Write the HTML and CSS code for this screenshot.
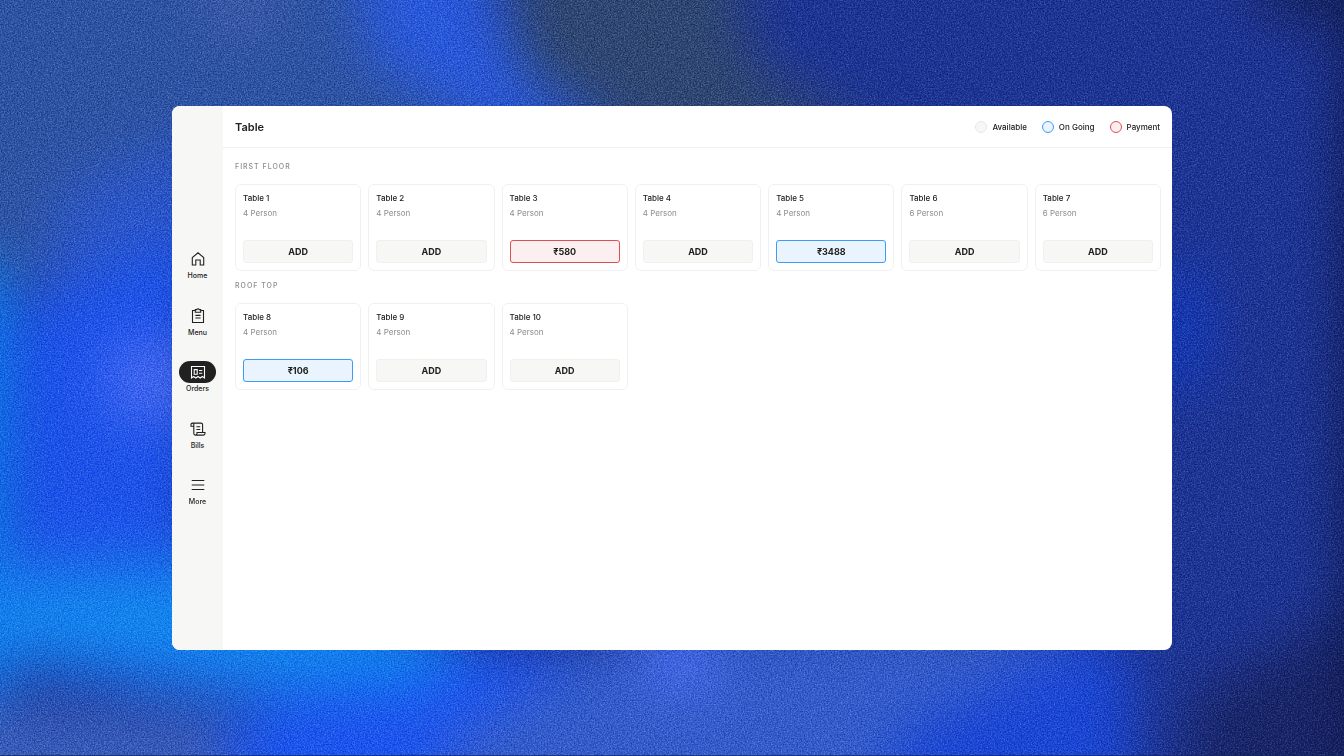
FILE: index.html
```html
<!DOCTYPE html>
<html lang="en">
<head>
    <meta charset="UTF-8">
    <meta name="viewport" content="width=device-width, initial-scale=1.0">
    <title>Table</title>
    <link rel="stylesheet" href="styles.css">
</head>
<body>
    <!-- Grainy blue backdrop -->
    <svg class="backdrop" viewBox="0 0 1344 756" preserveAspectRatio="none" aria-hidden="true">
        <defs>
            <filter id="soft" x="-20%" y="-20%" width="140%" height="140%" color-interpolation-filters="sRGB">
                <feGaussianBlur stdDeviation="28"/>
            </filter>
            <filter id="grain" x="0" y="0" width="100%" height="100%" color-interpolation-filters="sRGB">
                <feTurbulence type="fractalNoise" baseFrequency="0.7" numOctaves="3" seed="4"/>
                <feColorMatrix values="1.4 0 0 0 -0.2  1.4 0 0 0 -0.2  1.4 0 0 0 -0.2  0 0 0 0 1"/>
            </filter>
        </defs>
        <rect width="1344" height="756" fill="#1d3494"/>
        <g filter="url(#soft)">
            <path d="M-80-80H440L560 160H200V290H-80Z" fill="#2d53a3"/>
            <path d="M350-80H480L510 40 620 140H500L370 60Z" fill="#2858da"/>
            <ellipse cx="240" cy="0" rx="18" ry="34" fill="#5062b4"/>
            <path d="M500-80H730L750 60 890 150H640L520 70Z" fill="#2e4672"/>
            <path d="M60 190L210 130V300H40Z" fill="#2a56c8"/>
            <path d="M10 310L200 230V560H10Z" fill="#1c52e8"/>
            <ellipse cx="150" cy="380" rx="44" ry="40" fill="#4a6df2"/>
            <path d="M-80 260H4V700H-80Z" fill="#0a80ec"/>
            <path d="M-30 560L200 550 480 640 440 710 200 700 -30 660Z" fill="#1a6ee6"/>
            <path d="M-30 590L200 580 440 640 400 690 200 660 -30 640Z" fill="#1188ee"/>
            <path d="M-80 700L225 715 240 840H-80Z" fill="#385cba"/>
            <path d="M230 720L480 650H640V690L420 840H230Z" fill="#1c54ec"/>
            <ellipse cx="370" cy="660" rx="80" ry="26" fill="#0f84ee"/>
            <path d="M640 620H1080V840H430L450 740Z" fill="#335cca"/>
            <ellipse cx="680" cy="655" rx="30" ry="34" fill="#4f72fa"/>
            <path d="M890 740L1080 640H1130V840H890Z" fill="#1a46d4"/>
            <ellipse cx="1180" cy="330" rx="24" ry="70" fill="#1039c2"/>
            <path d="M1190 700L1430 560V840H1190Z" fill="#182468"/>
            <path d="M1342-80H1440V840H1342Z" fill="#101a54"/>
            <ellipse cx="1320" cy="-10" rx="70" ry="30" fill="#131f5a"/>
        </g>
        <rect class="grain" width="1344" height="756" filter="url(#grain)"/>
        <rect y="755" width="1344" height="1" fill="#14265e" fill-opacity="0.7"/>
    </svg>

    <div class="app">
        <aside class="sidebar">
            <nav class="nav">
                <a class="nav-item" href="#">
                    <span class="nav-icon">
                        <svg viewBox="0 0 16 16"><path d="M2.3 14V6.6L8 1.8l5.7 4.8V14h-3.5V9H5.8v5Z"/></svg>
                    </span>
                    <span>Home</span>
                </a>
                <a class="nav-item" href="#">
                    <span class="nav-icon">
                        <svg viewBox="0 0 16 16"><path d="M5.3 2.5H2.5v12h11v-12h-2.8M5.3 1.6h1.5a1.3 1.3 0 0 1 2.4 0h1.5v2.6H5.3ZM5.4 7.4h5.2M5.4 10h5.2"/></svg>
                    </span>
                    <span>Menu</span>
                </a>
                <a class="nav-item active" href="#">
                    <span class="nav-icon">
                        <svg viewBox="0 0 16 16"><path d="M1.5 14V2.5h13V14l-2.2-1.5L10.2 14 8 12.5 5.8 14l-2.1-1.5ZM4.2 5.6h3v4.6h-3ZM9 6.5h3.3M9 9.3h3.3"/></svg>
                    </span>
                    <span>Orders</span>
                </a>
                <a class="nav-item" href="#">
                    <span class="nav-icon">
                        <svg viewBox="0 0 16 16"><path d="M3.8 5.3H1V3.5a1.4 1.4 0 0 1 2.8 0v9a1.6 1.6 0 0 0 1.6 1.6h8A1.6 1.6 0 0 0 15 12.5v-1H7v1a1.6 1.6 0 0 1-1.6 1.6M2.4 2.1H11a1.6 1.6 0 0 1 1.6 1.6v7.8M6.4 5.8h3.8M6.4 8.5h3.8"/></svg>
                    </span>
                    <span>Bills</span>
                </a>
                <a class="nav-item" href="#">
                    <span class="nav-icon">
                        <svg viewBox="0 0 16 16"><path d="M1.7 3.5h12.6M1.7 8h12.6M1.7 12.5h12.6"/></svg>
                    </span>
                    <span>More</span>
                </a>
            </nav>
        </aside>

        <main class="main">
            <header class="header">
                <h1>Table</h1>
                <ul class="legend">
                    <li><span class="dot"></span>Available</li>
                    <li><span class="dot ongoing"></span>On Going</li>
                    <li><span class="dot payment"></span>Payment</li>
                </ul>
            </header>

            <div class="floors">
                <section class="floor">
                    <h2>FIRST FLOOR</h2>
                    <div class="card-container">
                        <div class="card">
                            <h3>Table 1</h3>
                            <p>4 Person</p>
                            <button>ADD</button>
                        </div>
                        <div class="card">
                            <h3>Table 2</h3>
                            <p>4 Person</p>
                            <button>ADD</button>
                        </div>
                        <div class="card">
                            <h3>Table 3</h3>
                            <p>4 Person</p>
                            <button class="payment">₹580</button>
                        </div>
                        <div class="card">
                            <h3>Table 4</h3>
                            <p>4 Person</p>
                            <button>ADD</button>
                        </div>
                        <div class="card">
                            <h3>Table 5</h3>
                            <p>4 Person</p>
                            <button class="ongoing">₹3488</button>
                        </div>
                        <div class="card">
                            <h3>Table 6</h3>
                            <p>6 Person</p>
                            <button>ADD</button>
                        </div>
                        <div class="card">
                            <h3>Table 7</h3>
                            <p>6 Person</p>
                            <button>ADD</button>
                        </div>
                    </div>
                </section>

                <section class="floor">
                    <h2>ROOF TOP</h2>
                    <div class="card-container">
                        <div class="card">
                            <h3>Table 8</h3>
                            <p>4 Person</p>
                            <button class="ongoing">₹106</button>
                        </div>
                        <div class="card">
                            <h3>Table 9</h3>
                            <p>4 Person</p>
                            <button>ADD</button>
                        </div>
                        <div class="card">
                            <h3>Table 10</h3>
                            <p>4 Person</p>
                            <button>ADD</button>
                        </div>
                    </div>
                </section>
            </div>
        </main>
    </div>
</body>
</html>
```

FILE: styles.css
```css
* {
    box-sizing: border-box;
}
body {
    margin: 0;
    min-height: 100vh;
    padding: 106px 172px;
    display: flex;
    font-family: Inter, 'Liberation Sans', sans-serif;
    color: #212121;
    background-color: #1b3190;
}
h1, h2, h3, p, ul {
    margin: 0;
    padding: 0;
}
.backdrop {
    position: fixed;
    inset: 0;
    width: 100%;
    height: 100%;
    z-index: -1;
}
.grain {
    mix-blend-mode: soft-light;
    opacity: 0.6;
}
.app {
    flex: 1;
    display: flex;
    background-color: #fff;
    border-radius: 8px;
    overflow: hidden;
}

/* Sidebar */
.sidebar {
    width: 51px;
    display: flex;
    flex-direction: column;
    justify-content: center;
    background-color: #f7f7f5;
}
.nav {
    height: 260px;
    display: flex;
    flex-direction: column;
    align-items: center;
    justify-content: space-between;
}
.nav-item {
    display: flex;
    flex-direction: column;
    align-items: center;
    font-size: 7px;
    line-height: 12px;
    font-weight: 500;
    color: #212121;
    text-decoration: none;
}
.nav-icon {
    width: 37px;
    height: 22px;
    display: flex;
    align-items: center;
    justify-content: center;
    border-radius: 11px;
}
.nav-icon svg {
    width: 16px;
    height: 16px;
    fill: none;
    stroke: currentColor;
    stroke-width: 1.1;
}
.active .nav-icon {
    background-color: #212121;
    color: #fff;
}

/* Header */
.main {
    flex: 1;
    min-width: 0;
}
.header {
    height: 42px;
    display: flex;
    align-items: center;
    justify-content: space-between;
    padding: 0 12px;
    border-bottom: 1px solid #f0f0f0;
}
.header h1 {
    font-size: 11px;
    line-height: 14px;
    font-weight: 600;
}
.legend {
    display: flex;
    gap: 15px;
    list-style: none;
    font-size: 8px;
    line-height: 12px;
    font-weight: 500;
}
.legend li {
    display: flex;
    align-items: center;
    gap: 5px;
}
.dot {
    width: 12px;
    height: 12px;
    border: 1px solid #e6e6e4;
    border-radius: 50%;
    background-color: #f7f7f5;
}

/* Floors */
.floors {
    padding: 4px 11px 0 12px;
}
.floor {
    padding-top: 9px;
}
.floor h2 {
    font-size: 7px;
    line-height: 12px;
    font-weight: 500;
    letter-spacing: 1px;
    color: #8c8c8c;
    margin-bottom: 11px;
}
.card-container {
    display: grid;
    grid-template-columns: repeat(7, 1fr);
    gap: 7px;
}
.card {
    display: flex;
    flex-direction: column;
    padding: 7px;
    border: 1px solid #f0f0f0;
    border-radius: 6px;
}
.card h3 {
    font-size: 8px;
    line-height: 12px;
    font-weight: 500;
}
.card p {
    font-size: 8px;
    line-height: 12px;
    color: #8c8c8c;
    margin: 3px 0 21px;
}
.card button {
    height: 23px;
    padding: 0;
    border: 1px solid #f0f0ee;
    border-radius: 3px;
    background-color: #f7f7f5;
    color: #212121;
    font-family: inherit;
    font-size: 9px;
    font-weight: 700;
    cursor: pointer;
}
.dot.ongoing, .card button.ongoing {
    border-color: #3d9bf5;
    background-color: #e9f4ff;
}
.dot.payment, .card button.payment {
    border-color: #dd4f54;
    background-color: #fcefef;
}
```
